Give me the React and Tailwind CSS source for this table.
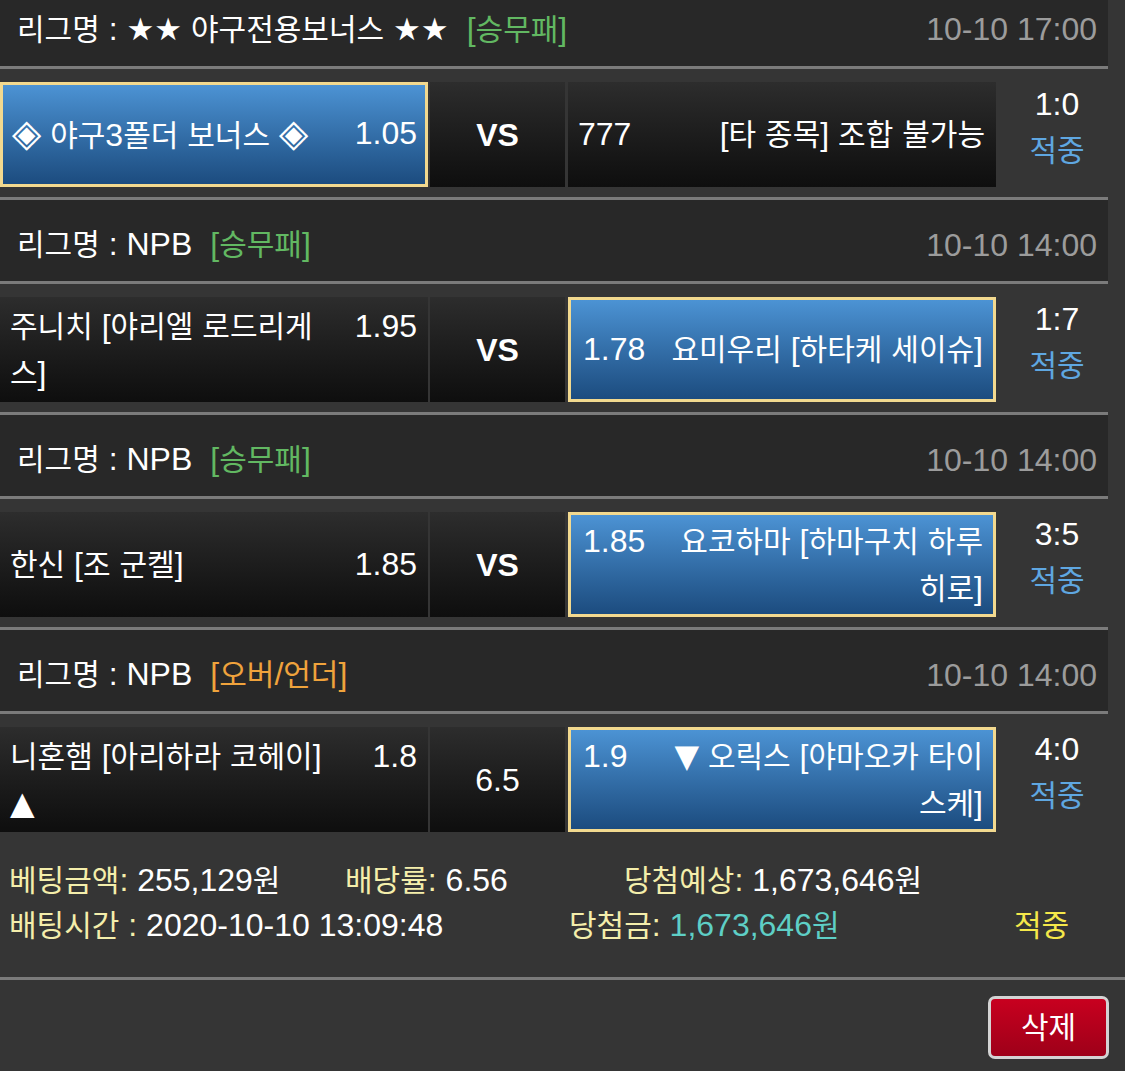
import React from "react";

const SPLIT = /([\u1100-\u11ff\u3130-\u318f\uac00-\ud7af]+|[◈★▲▼])/;
const HANGUL = /[\u1100-\u11ff\u3130-\u318f\uac00-\ud7af]/;

function T({ s }) {
  const parts = s.split(SPLIT);
  return (
    <>
      {parts.map((p, i) => {
        if (!p) return null;
        if (p === "★")
          return (
            <span key={i} className="font-['DejaVu_Sans'] text-[31px]">
              ★
            </span>
          );
        if (p === "◈")
          return (
            <span key={i} className="font-['DejaVu_Sans'] text-[38px]">
              ◈
            </span>
          );
        if (p === "▲" || p === "▼")
          return (
            <span key={i} className="font-['DejaVu_Sans'] text-[32px]">
              {p}
            </span>
          );
        if (HANGUL.test(p))
          return (
            <span key={i} className="text-[30px]">
              {p}
            </span>
          );
        return <React.Fragment key={i}>{p}</React.Fragment>;
      })}
    </>
  );
}

const dark = "bg-linear-to-b from-[#2d2d2d] to-[#0e0e0e]";
const blue =
  "bg-linear-to-b from-[#4c93d4] to-[#1c4c7f] border-[3px] border-[#f2d98f]";

function Line({ full }) {
  return <div className={"h-[3px] bg-[#7b7b7b] " + (full ? "w-[1125px]" : "w-[1108px]")} />;
}

function Header({ first, league, type, typeColor, time }) {
  return (
    <div
      className={
        "w-[1108px] bg-[#282828] flex items-center justify-between pl-[17px] pr-[11px] " +
        (first ? "h-[66px] pb-[8px]" : "h-[81px] pt-[8px]")
      }
    >
      <div className="whitespace-nowrap leading-[40px]">
        <T s={"리그명 : " + league} />
        <span className={"ml-[18px] " + typeColor}>
          <T s={type} />
        </span>
      </div>
      <div className="text-[#9c9c9c] leading-[40px]">{time}</div>
    </div>
  );
}

function LeftCell({ selected, lines, odds }) {
  return (
    <div
      className={
        "w-[428px] h-[105px] flex items-center " +
        (selected ? blue + " pl-[9px] pr-[8px]" : dark + " pl-[10px] pr-[11px]")
      }
    >
      <div className="flex w-full items-start leading-[46px]">
        <div className="flex-1 whitespace-nowrap">
          {lines.map((l, i) => (
            <div key={i}>
              <T s={l} />
            </div>
          ))}
        </div>
        <div>{odds}</div>
      </div>
    </div>
  );
}

function RightCell({ selected, lines, odds }) {
  return (
    <div
      className={
        "w-[428px] h-[105px] flex items-center " +
        (selected ? blue + " pl-[12px] pr-[10px]" : dark + " pl-[10px] pr-[11px]")
      }
    >
      <div className="flex w-full items-start leading-[46px]">
        <div>{odds}</div>
        <div className="flex-1 text-right whitespace-nowrap">
          {lines.map((l, i) => (
            <div key={i}>
              <T s={l} />
            </div>
          ))}
        </div>
      </div>
    </div>
  );
}

function MatchRow({ left, right, mid, midBold, score }) {
  return (
    <div className="w-[1108px] h-[128px] pt-[13px] pb-[10px] flex">
      <LeftCell {...left} />
      <div className="w-[2px]" />
      <div
        className={
          "w-[135px] h-[105px] flex items-center justify-center " +
          dark +
          (midBold ? " font-bold" : "")
        }
      >
        {mid}
      </div>
      <div className="w-[3px]" />
      <RightCell {...right} />
      <div className="flex-1 h-[105px] flex flex-col items-center justify-center pl-[10px] pb-[14px] leading-[46px]">
        <div>{score}</div>
        <div className="text-[#5fa7e1]">
          <T s="적중" />
        </div>
      </div>
    </div>
  );
}

const data = [
  {
    league: "★★ 야구전용보너스 ★★",
    type: "[승무패]",
    typeColor: "text-[#62b862]",
    time: "10-10 17:00",
    left: { selected: true, lines: ["◈ 야구3폴더 보너스 ◈"], odds: "1.05" },
    right: { selected: false, lines: ["[타 종목] 조합 불가능"], odds: "777" },
    mid: "VS",
    midBold: true,
    score: "1:0",
  },
  {
    league: "NPB",
    type: "[승무패]",
    typeColor: "text-[#62b862]",
    time: "10-10 14:00",
    left: { selected: false, lines: ["주니치 [야리엘 로드리게", "스]"], odds: "1.95" },
    right: { selected: true, lines: ["요미우리 [하타케 세이슈]"], odds: "1.78" },
    mid: "VS",
    midBold: true,
    score: "1:7",
  },
  {
    league: "NPB",
    type: "[승무패]",
    typeColor: "text-[#62b862]",
    time: "10-10 14:00",
    left: { selected: false, lines: ["한신 [조 군켈]"], odds: "1.85" },
    right: { selected: true, lines: ["요코하마 [하마구치 하루", "히로]"], odds: "1.85" },
    mid: "VS",
    midBold: true,
    score: "3:5",
  },
  {
    league: "NPB",
    type: "[오버/언더]",
    typeColor: "text-[#f0a33c]",
    time: "10-10 14:00",
    left: { selected: false, lines: ["니혼햄 [아리하라 코헤이]", "▲"], odds: "1.8" },
    right: { selected: true, lines: ["▼ 오릭스 [야마오카 타이", "스케]"], odds: "1.9" },
    mid: "6.5",
    midBold: false,
    score: "4:0",
  },
];

export default function App() {
  return (
    <div className="w-[1125px] h-[1071px] overflow-hidden bg-[#353535] text-white text-[32px] font-['Liberation_Sans','Noto_Sans_CJK_KR',sans-serif]">
      {data.map((d, i) => (
        <div key={i}>
          {i > 0 && <Line />}
          <Header
            first={i === 0}
            league={d.league}
            type={d.type}
            typeColor={d.typeColor}
            time={d.time}
          />
          <Line />
          <MatchRow left={d.left} right={d.right} mid={d.mid} midBold={d.midBold} score={d.score} />
        </div>
      ))}

      <div className="pt-[16px] pb-[29px] leading-[44px] whitespace-nowrap">
        <div className="flex">
          <div className="w-[345px] pl-[9px]">
            <span className="text-[#f4eeab]">
              <T s="베팅금액:" />
            </span>{" "}
            <T s="255,129원" />
          </div>
          <div className="w-[279px]">
            <span className="text-[#f4eeab]">
              <T s="배당률:" />
            </span>{" "}
            6.56
          </div>
          <div>
            <span className="text-[#f4eeab]">
              <T s="당첨예상:" />
            </span>{" "}
            <T s="1,673,646원" />
          </div>
        </div>
        <div className="flex">
          <div className="w-[569px] pl-[9px]">
            <span className="text-[#f4eeab]">
              <T s="배팅시간 :" />
            </span>{" "}
            2020-10-10 13:09:48
          </div>
          <div className="w-[445px]">
            <span className="text-[#f4eeab]">
              <T s="당첨금:" />
            </span>{" "}
            <span className="text-[#5ecfc6]">
              <T s="1,673,646원" />
            </span>
          </div>
          <div className="text-[#f5e84a]">
            <T s="적중" />
          </div>
        </div>
      </div>

      <Line full />

      <div className="flex justify-end pt-[16px] pr-[16px]">
        <div className="w-[121px] h-[63px] rounded-[7px] border-[3px] border-[#d4d4d4] bg-linear-to-b from-[#c8001f] to-[#9e0019] flex items-center justify-center">
          <T s="삭제" />
        </div>
      </div>
    </div>
  );
}
